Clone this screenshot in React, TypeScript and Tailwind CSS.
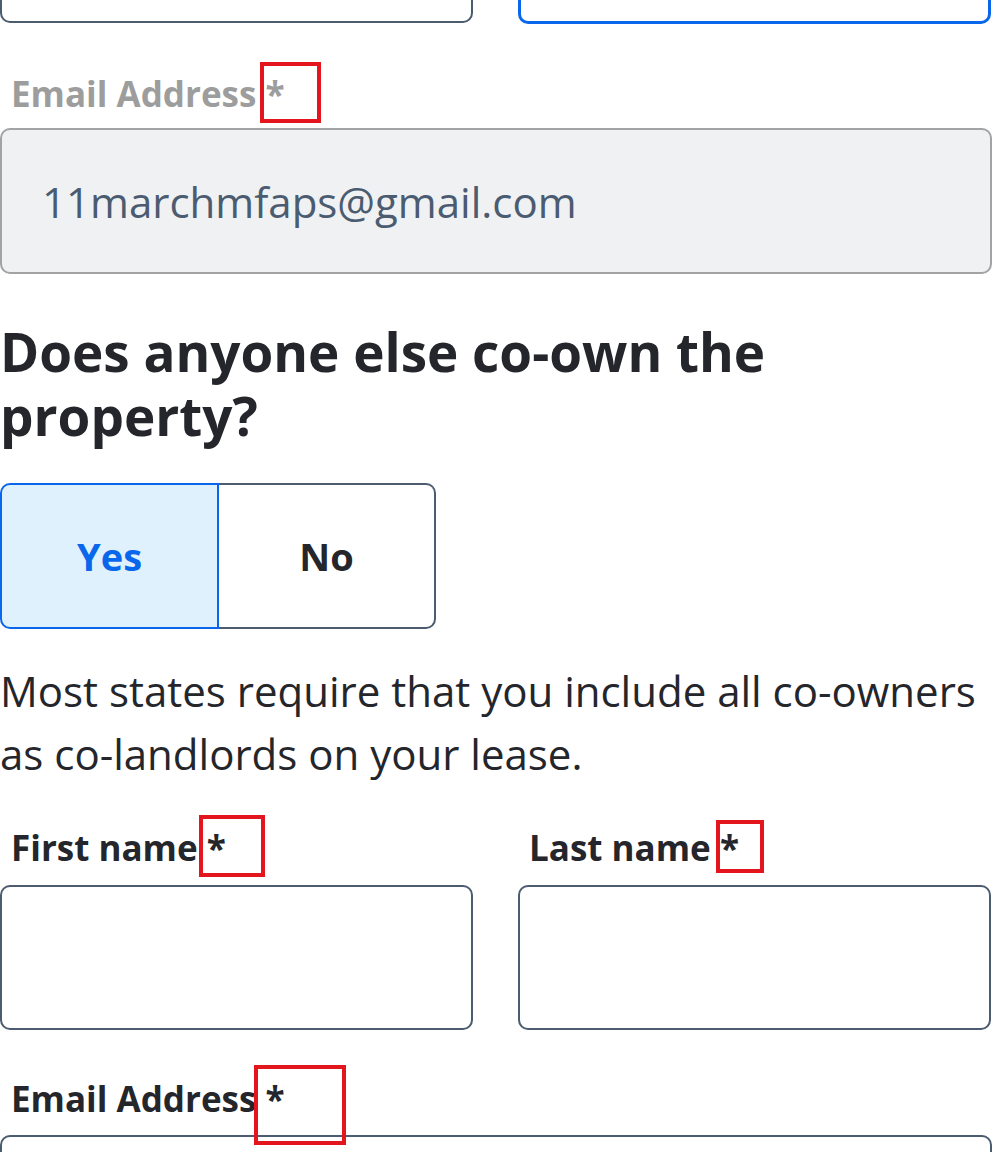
import React from "react";

const font = { fontFamily: '"Open Sans", "Noto Sans", sans-serif' };

function RedBox({ x, y, w, h }: { x: number; y: number; w: number; h: number }) {
  return (
    <div
      className="absolute border-4 border-[#e3161e] pointer-events-none"
      style={{ left: x, top: y, width: w, height: h }}
    />
  );
}

export default function App() {
  return (
    <div className="relative w-[992px] h-[1152px] overflow-hidden bg-white text-[#24262b]" style={font}>
      {/* top inputs (cut off) */}
      <div className="grid grid-cols-[473px_473px] gap-x-[45px]">
        <div className="h-[23px] border-2 border-t-0 border-[#4b5b70] rounded-b-[10px]" />
        <div className="h-[24px] border-[3px] border-t-0 border-[#0867ea] rounded-b-[10px]" />
      </div>

      {/* disabled email */}
      <div className="mt-[50px] pl-[11px] text-[35px] leading-[40px] font-bold text-[#9d9d9d]">
        Email Address <span>*</span>
      </div>
      <div className="mt-[14px] h-[146px] rounded-[10px] border-2 border-[#a3a3a3] bg-[#f0f1f3] flex items-center pl-[40px]">
        <span className="text-[42px] text-[#4b5b70]">11marchmfaps@gmail.com</span>
      </div>

      {/* question */}
      <h2 className="mt-[46px] text-[53px] leading-[64px] font-bold text-[#24262b] w-[800px]">
        Does anyone else co-own the property?
      </h2>

      <div className="mt-[35px] flex w-[436px] h-[146px]">
        <button className="flex-1 rounded-l-[10px] border-2 border-[#0867ea] bg-[#e0f1fe] text-[#0867ea] text-[38px] font-bold">
          Yes
        </button>
        <button className="flex-1 rounded-r-[10px] border-2 border-l-0 border-[#4b5b70] bg-white text-[#24262b] text-[38px] font-bold">
          No
        </button>
      </div>

      <p className="mt-[30px] text-[42px] leading-[63px] text-[#24262b]">
        Most states require that you include all co-owners as co-landlords on your lease.
      </p>

      <div className="mt-[43px] grid grid-cols-[473px_473px] gap-x-[45px]">
        <div>
          <div className="pl-[11px] text-[35px] leading-[40px] font-bold">
            First name <span>*</span>
          </div>
          <div className="mt-[17px] h-[145px] rounded-[10px] border-2 border-[#4b5b70]" />
        </div>
        <div>
          <div className="pl-[11px] text-[35px] leading-[40px] font-bold">
            Last name <span>*</span>
          </div>
          <div className="mt-[17px] h-[145px] rounded-[10px] border-2 border-[#4b5b70]" />
        </div>
      </div>

      <div className="mt-[49px] pl-[11px] text-[35px] leading-[40px] font-bold">
        Email Address <span>*</span>
      </div>
      <div className="mt-[16px] h-[145px] rounded-[10px] border-2 border-[#4b5b70]" />

      <RedBox x={260} y={62} w={61} h={61} />
      <RedBox x={199} y={815} w={66} h={62} />
      <RedBox x={716} y={820} w={48} h={53} />
      <RedBox x={254} y={1065} w={92} h={80} />
    </div>
  );
}
